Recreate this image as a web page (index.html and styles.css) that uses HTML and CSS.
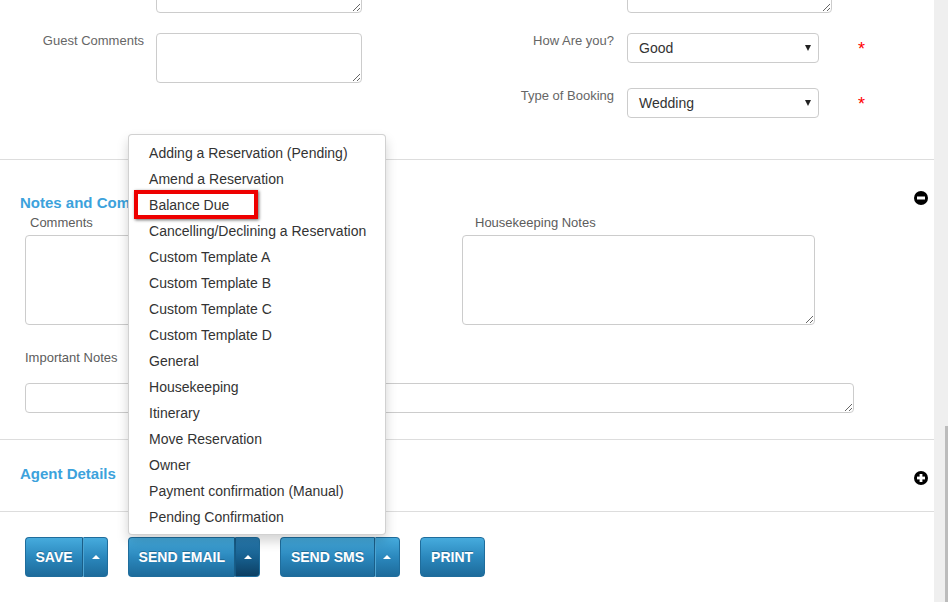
FILE: index.html
```html
<!DOCTYPE html>
<html>
<head>
<meta charset="utf-8">
<title>Reservation</title>
<link rel="stylesheet" href="styles.css">
</head>
<body>
<div class="screen">
  <div class="page">
    <section class="form-top">
      <div class="row row0">
        <div class="lbl-l"></div>
        <textarea class="ta-small"></textarea>
        <div class="lbl-r"></div>
        <textarea class="ta-small ta-right"></textarea>
      </div>
      <div class="row row1">
        <label class="lbl-l">Guest Comments</label>
        <textarea class="ta-small"></textarea>
        <label class="lbl-r">How Are you?</label>
        <div class="select"><span>Good</span><i class="arrow"></i></div>
        <span class="req">*</span>
      </div>
      <div class="row row2">
        <div class="lbl-l"></div>
        <div class="spacer-l"></div>
        <label class="lbl-r">Type of Booking</label>
        <div class="select"><span>Wedding</span><i class="arrow"></i></div>
        <span class="req">*</span>
      </div>
    </section>

    <section class="notes">
      <div class="sec-head">
        <h3 class="sec-title">Notes and Comments</h3>
        <svg class="toggle toggle-minus" width="14" height="14" viewBox="0 0 14 14"><circle cx="7" cy="7" r="7" fill="#000"/><rect x="3" y="5.5" width="8" height="3" fill="#fff"/></svg>
      </div>
      <div class="note-cols">
        <div class="note-col">
          <label class="note-lbl lbl-comments">Comments</label>
          <textarea class="ta-notes"></textarea>
        </div>
        <div class="note-col">
          <label class="note-lbl lbl-house">Housekeeping Notes</label>
          <textarea class="ta-notes"></textarea>
        </div>
      </div>
      <label class="note-lbl lbl-important">Important Notes</label>
      <textarea class="ta-important"></textarea>
    </section>

    <section class="agent">
      <div class="sec-head">
        <h3 class="sec-title">Agent Details</h3>
        <svg class="toggle toggle-plus" width="14" height="14" viewBox="0 0 14 14"><circle cx="7" cy="7" r="7" fill="#000"/><rect x="3" y="5.6" width="8" height="2.8" fill="#fff"/><rect x="5.6" y="3" width="2.8" height="8" fill="#fff"/></svg>
      </div>
    </section>

    <section class="actions">
      <div class="btn-group">
        <button class="btn btn-main">SAVE</button><button class="btn btn-caret"><i class="caret"></i></button>
      </div>
      <div class="btn-group dropup">
        <button class="btn btn-main">SEND EMAIL</button><button class="btn btn-caret active"><i class="caret"></i></button>
        <ul class="menu">
          <li class="item">Adding a Reservation (Pending)</li>
          <li class="item">Amend a Reservation</li>
          <li class="item marked">Balance Due</li>
          <li class="item">Cancelling/Declining a Reservation</li>
          <li class="item">Custom Template A</li>
          <li class="item">Custom Template B</li>
          <li class="item">Custom Template C</li>
          <li class="item">Custom Template D</li>
          <li class="item">General</li>
          <li class="item">Housekeeping</li>
          <li class="item">Itinerary</li>
          <li class="item">Move Reservation</li>
          <li class="item">Owner</li>
          <li class="item">Payment confirmation (Manual)</li>
          <li class="item">Pending Confirmation</li>
        </ul>
      </div>
      <div class="btn-group">
        <button class="btn btn-main">SEND SMS</button><button class="btn btn-caret"><i class="caret"></i></button>
      </div>
      <div class="btn-group">
        <button class="btn btn-single">PRINT</button>
      </div>
    </section>
  </div>
  <div class="scroll">
    <div class="scroll-gap"></div>
    <div class="thumb"></div>
  </div>
</div>
</body>
</html>
```
FILE: styles.css
```css
html, body {
  margin: 0;
  padding: 0;
  background: #fff;
  overflow: hidden;
}
body {
  font-family: "Liberation Sans", Arial, sans-serif;
  font-size: 13px;
  color: #333;
}
.screen {
  display: flex;
  width: 948px;
  height: 602px;
  overflow: hidden;
}
.page {
  width: 934px;
  flex: 0 0 934px;
}
textarea {
  display: block;
  box-sizing: border-box;
  border: 1px solid #cccccc;
  border-radius: 4px;
  margin: 0;
  padding: 4px 6px;
  font-family: inherit;
  background: #fff;
}

/* top form */
.form-top {
  padding-bottom: 41px;
  border-bottom: 1px solid #ddd;
}
.row {
  display: flex;
  align-items: flex-start;
}
.row0 { margin-top: -37px; }
.row1 { margin-top: 20px; }
.row2 { margin-top: 5px; }
.lbl-l {
  width: 144px;
  margin-right: 12px;
  text-align: right;
  color: #666;
  font-size: 13px;
  line-height: 16px;
  padding-top: 0;
}
.lbl-r {
  width: 252px;
  margin-right: 13px;
  text-align: right;
  color: #666;
  font-size: 13px;
  line-height: 16px;
  padding-top: 0;
}
.ta-small {
  width: 206px;
  height: 50px;
}
.ta-right {
  width: 205px;
}
.spacer-l { width: 206px; }
.select {
  width: 192px;
  height: 30px;
  box-sizing: border-box;
  border: 1px solid #cccccc;
  border-radius: 4px;
  display: flex;
  align-items: center;
  justify-content: space-between;
  padding: 0 7px 0 11px;
  font-size: 14px;
  color: #333;
}
.arrow {
  width: 0;
  height: 0;
  border-left: 3.5px solid transparent;
  border-right: 3.5px solid transparent;
  border-top: 6px solid #222;
}
.req {
  margin-left: 39px;
  color: #f00;
  font-size: 18px;
  line-height: 16px;
  margin-top: 8px;
}

/* sections */
.sec-head {
  display: flex;
  justify-content: space-between;
  align-items: flex-start;
  height: 18px;
  padding: 0 6px 0 20px;
}
.sec-title {
  margin: 0;
  font-size: 15px;
  line-height: 18px;
  font-weight: bold;
  color: #3ca2dc;
}
.toggle { display: block; }
.toggle-minus { margin-top: -3px; }
.toggle-plus { margin-top: 6px; }

.notes {
  padding-top: 34px;
  padding-bottom: 26px;
  border-bottom: 1px solid #ddd;
}
.note-cols {
  display: flex;
  gap: 84px;
  padding-left: 25px;
  margin-top: 3px;
}
.note-col {
  width: 353px;
}
.note-lbl {
  display: block;
  color: #5c5c5c;
  font-size: 13px;
  line-height: 15px;
}
.lbl-comments { padding-left: 5px; }
.lbl-house { padding-left: 13px; }
.ta-notes {
  width: 353px;
  height: 90px;
  margin-top: 5px;
}
.lbl-important {
  margin: 25px 0 0 25px;
}
.ta-important {
  width: 829px;
  height: 30px;
  margin: 18px 0 0 25px;
}

.agent {
  padding-top: 25px;
  padding-bottom: 28px;
  border-bottom: 1px solid #ddd;
}

/* buttons */
.actions {
  display: flex;
  gap: 20px;
  padding: 25px 0 0 25px;
}
.btn-group {
  display: flex;
  position: relative;
}
.btn {
  height: 40px;
  margin: 0;
  border: 1px solid #1f6d9c;
  background: linear-gradient(#46abdd, #2b88bd 50%, #1d6b9b);
  color: #fff;
  font-family: "Liberation Sans", Arial, sans-serif;
  font-weight: bold;
  font-size: 14px;
  text-shadow: 0 -1px 0 rgba(0, 0, 0, 0.25);
  cursor: pointer;
}
.btn-main {
  padding: 0 9.5px;
  border-radius: 4px 0 0 4px;
  border-right: 1px solid #1a5e88;
}
.btn-caret {
  width: 25px;
  padding: 0;
  border-left: 1px solid #4ea5d2;
  border-radius: 0 4px 4px 0;
  display: flex;
  align-items: center;
  justify-content: center;
}
.btn-caret.active {
  background: linear-gradient(#2a7db2, #17608f 50%, #0c3f63);
  border-left-color: #145a86;
}
.btn-single {
  padding: 0 10.5px;
  border-radius: 4px;
}
.caret {
  width: 0;
  height: 0;
  border-left: 4px solid transparent;
  border-right: 4px solid transparent;
  border-bottom: 4px solid #fff;
}

/* dropdown menu */
.menu {
  position: absolute;
  left: 0;
  bottom: 100%;
  margin: 0 0 2px 0;
  width: 258px;
  box-sizing: border-box;
  list-style: none;
  padding: 5px 0 4px 0;
  background: #fff;
  border: 1px solid rgba(0, 0, 0, 0.18);
  border-radius: 4px;
  box-shadow: 0 6px 12px rgba(0, 0, 0, 0.175);
  z-index: 10;
}
.item {
  position: relative;
  padding: 0 20px;
  height: 26px;
  line-height: 26px;
  font-size: 14px;
  color: #333;
  white-space: nowrap;
}
.item.marked::after {
  content: "";
  position: absolute;
  left: 5px;
  top: -2px;
  width: 124px;
  height: 29px;
  box-sizing: border-box;
  border: 4px solid #ee0000;
  box-shadow: 1px 1px 3px rgba(0, 0, 0, 0.6);
}

/* scrollbar */
.scroll {
  width: 14px;
  flex: 0 0 14px;
  background: #efefef;
  display: flex;
  flex-direction: column;
  align-items: flex-end;
}
.scroll-gap {
  height: 426px;
}
.thumb {
  flex: 1;
  width: 3px;
  background: #bcbcbc;
}
```
